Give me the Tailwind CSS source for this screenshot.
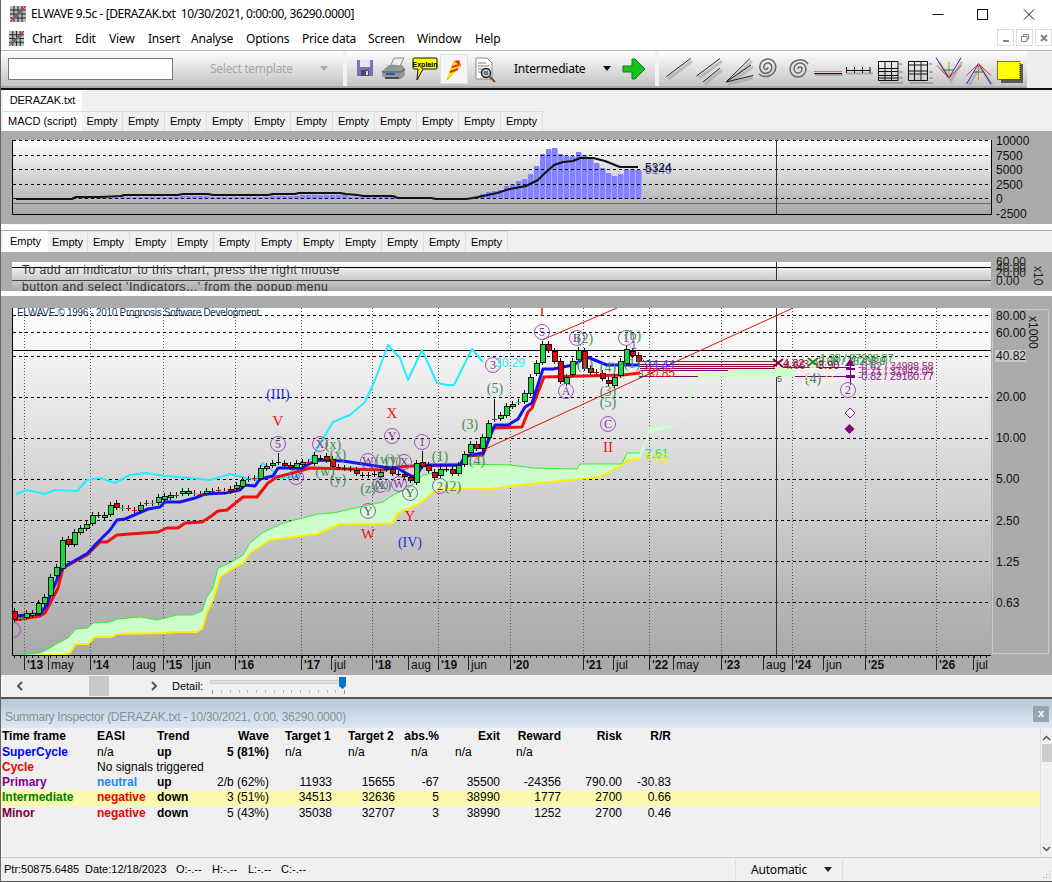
<!DOCTYPE html>
<html lang="en">
<head>
<meta charset="UTF-8" />
<title>ELWAVE 9.5c</title>
<script src="https://cdn.jsdelivr.net/npm/@tailwindcss/browser@4"></script>
</head>
<body class="relative w-[1052px] h-[882px] overflow-hidden bg-[#f0f0f0] text-black text-[12px] font-['Liberation_Sans',sans-serif]">

<!-- Title bar -->
<div class="flex items-center h-[27px] bg-white font-['Noto_Sans',sans-serif]">
  <svg class="ml-[10px] w-[16px] h-[16px]" viewBox="0 0 16 16"><rect width="16" height="16" fill="#bbb"/><path d="M0 4H16M0 8H16M0 12H16M4 0V16M8 0V16M12 0V16" stroke="#222" stroke-width="1"/><path d="M3 13L13 4" stroke="#19b5c9" stroke-width="3"/><path d="M0 16L16 0" stroke="#e01010" stroke-width="1.2"/></svg>
  <span class="ml-[5px] text-[12px] tracking-[-0.41px] whitespace-pre">ELWAVE 9.5c - [DERAZAK.txt  10/30/2021, 0:00:00, 36290.0000]</span>
  <svg class="ml-auto mr-[16px] w-[112px] h-[27px]" viewBox="0 0 112 27"><path d="M8.500 14.500H19.500" stroke="#111"/><rect x="53.500" y="9.500" width="10" height="10" fill="none" stroke="#111"/><path d="M100 9.500L110 19.500M110 9.500L100 19.500" stroke="#111"/></svg>
</div>

<!-- Menu bar -->
<div class="flex items-center h-[23px] bg-white font-['Noto_Sans',sans-serif] text-[12px] tracking-[-0.2px]">
  <div class="w-[32px] pl-[9px]"><svg class="w-[15px] h-[15px]" viewBox="0 0 16 16"><rect width="16" height="16" fill="#bbb"/><path d="M0 4H16M0 8H16M0 12H16M4 0V16M8 0V16M12 0V16" stroke="#222"/><path d="M3 13L13 4" stroke="#19b5c9" stroke-width="3"/><path d="M0 16L16 0" stroke="#e01010" stroke-width="1.2"/></svg></div>
  <span class="w-[43px]">Chart</span><span class="w-[34px]">Edit</span><span class="w-[39px]">View</span><span class="w-[43px]">Insert</span><span class="w-[55px]">Analyse</span><span class="w-[56px]">Options</span><span class="w-[66px]">Price data</span><span class="w-[49px]">Screen</span><span class="w-[58px]">Window</span><span>Help</span>
  <div class="ml-auto flex gap-[2px] mt-[-2px]">
    <div class="flex items-center justify-center w-[17px] h-[17px] border border-[#ddd]"><svg class="w-[10px] h-[10px]" viewBox="0 0 10 10"><path d="M2 8H8" stroke="#7a8591" stroke-width="2"/></svg></div>
    <div class="flex items-center justify-center w-[17px] h-[17px] border border-[#ddd]"><svg class="w-[10px] h-[10px]" viewBox="0 0 10 10"><path d="M3.500 3V1.500H8.500V6H7M1.500 3.500H7V8.500H1.500Z" fill="none" stroke="#7a8591"/></svg></div>
    <div class="flex items-center justify-center w-[17px] h-[17px] border border-[#ddd]"><svg class="w-[10px] h-[10px]" viewBox="0 0 10 10"><path d="M2 2L8 8M8 2L2 8" stroke="#7a8591" stroke-width="2"/></svg></div>
  </div>
</div>

<!-- Toolbar -->
<div class="flex items-center h-[40px] border-t border-t-[#bbb] border-b-2 border-b-[#111] bg-[#eeeeee]">
  <div class="flex items-center h-full w-[1027px] bg-gradient-to-b from-[#ffffff] to-[#c4c4c4] border-b-2 border-b-[#aaaaaa]">
    <div class="ml-[8px] w-[165px] h-[22px] bg-white border border-[#777]"></div>
    <span class="ml-[37px] w-[110px] text-[#a8a8a8] font-['Noto_Sans',sans-serif] tracking-[-0.3px]">Select template</span>
    <svg class="w-[8px] h-[5px]" viewBox="0 0 8 5"><path d="M0 0H8L4 5Z" fill="#aaa"/></svg>
    <div class="ml-[15px] w-[4px] h-full bg-[#f2f2f2]"></div>

    <!-- file tools -->
    <svg class="ml-[4px] w-[28px] h-[28px]" viewBox="0 0 28 28"><path d="M6 5H22V21H6Z" fill="#7e6fb8"/><rect x="9" y="5" width="10" height="7" fill="#e8e6f2"/><rect x="10" y="15" width="8" height="6" fill="#4a4a60"/><rect x="15" y="16" width="2" height="4" fill="#ddd"/></svg>
    <svg class="w-[28px] h-[28px]" viewBox="0 0 28 28"><path d="M3 16L10 10H23L26 14V20L22 24H8L3 21Z" fill="#8f979c"/><path d="M12 10L15 3H25L21 11Z" fill="#eee" stroke="#888"/><path d="M3 17L22 17L26 14" fill="none" stroke="#555"/><path d="M7 19H16" stroke="#1c5fa8" stroke-width="2"/><path d="M6 23H20" stroke="#333" stroke-width="1.500"/></svg>
    <svg class="ml-[4px] w-[28px] h-[28px]" viewBox="0 0 28 28"><path d="M3 3H25Q26 3 26 4V13Q26 14 25 14H12L6 25L7 14H3Q2 14 2 13V4Q2 3 3 3Z" fill="#ffff00" stroke="#111"/><text x="14" y="11.500" text-anchor="middle" font-size="7" font-weight="700" font-family="Liberation Sans">Explain</text></svg>
    <div class="ml-[1px] flex items-center justify-center w-[28px] h-[30px] bg-[#f6f6f6] border border-[#ddd]"><svg class="w-[24px] h-[26px]" viewBox="0 0 24 26"><path d="M5 24L12 5L19 10Z" fill="#ffe900" stroke="#e8c800"/><path d="M12 5L17 4L19 10Z" fill="#ee2b2b"/><path d="M8 16L16 13M10 11L17 9" stroke="#ee2b2b" stroke-width="2"/></svg></div>
    <svg class="ml-[1px] w-[28px] h-[28px]" viewBox="0 0 28 28"><path d="M7 3H18L23 8V24H7Z" fill="#fff" stroke="#888"/><path d="M9 8H17M9 11H20M9 14H20M9 17H14" stroke="#777"/><circle cx="17" cy="18" r="4.500" fill="#b9cbe0" stroke="#222" stroke-width="1.500"/><path d="M15 17H19M15 19H19" stroke="#222"/><path d="M20 21L26 27" stroke="#7a4a20" stroke-width="2"/></svg>

    <span class="ml-[17px] w-[89px] font-['Noto_Sans',sans-serif] tracking-[-0.2px]">Intermediate</span>
    <svg class="w-[8px] h-[5px]" viewBox="0 0 8 5"><path d="M0 0H8L4 5Z" fill="#111"/></svg>
    <svg class="ml-[11px] w-[24px] h-[22px]" viewBox="0 0 24 22"><path d="M1 8H10V1H13L23 11L13 21H10V14H1Z" fill="#16c41f" stroke="#0b7f12"/></svg>
    <div class="ml-[9px] w-[4px] h-full bg-[#f2f2f2]"></div>

    <!-- drawing tools -->
    <div class="ml-[4px] flex">
      <svg class="w-[30px] h-[34px]" viewBox="0 0 30 34"><path d="M5 27L29 9" stroke="#999" stroke-width="3" opacity=".5"/><path d="M3.500 24.500L27.500 6.500" stroke="#222"/></svg>
      <svg class="w-[30px] h-[34px]" viewBox="0 0 30 34"><path d="M6 26L29 9M12 32L29 18" stroke="#999" stroke-width="3" opacity=".5"/><path d="M3.500 24L27 6.500M10 30L27 16" stroke="#222"/></svg>
      <svg class="w-[30px] h-[34px]" viewBox="0 0 30 34"><path d="M5 32L29 9M5 32L30 15M5 32L30 26" stroke="#999" stroke-width="3" opacity=".5"/><path d="M3 30L27 6.500M3 30L28 13M3 30L30 23.500" stroke="#222"/></svg>
      <svg class="w-[30px] h-[34px]" viewBox="0 0 30 34"><path d="M15 17A2 2 0 0 1 19 17A4 4 0 0 1 11 17A6 6 0 0 1 23 17A8 8 0 0 1 7 17A10 10 0 0 1 25 12" transform="rotate(170 15 16)" fill="none" stroke="#666" stroke-width="1.500"/></svg>
      <svg class="w-[30px] h-[34px]" viewBox="0 0 30 34"><path d="M15 17A2 2 0 0 1 19 17A4 4 0 0 1 11 17A6 6 0 0 1 23 17A8 8 0 0 1 7 17A10 10 0 0 1 25 12" fill="none" stroke="#666" stroke-width="1.500"/></svg>
      <svg class="w-[30px] h-[34px]" viewBox="0 0 30 34"><path d="M1.500 19.500H28.500" stroke="#f00" stroke-dasharray="1 1"/><path d="M2 23H30" stroke="#888" stroke-width="2" opacity=".6"/><path d="M1.500 21.500H29" stroke="#111"/></svg>
      <svg class="w-[30px] h-[34px]" viewBox="0 0 30 34"><path d="M4 21.500H30" stroke="#888" stroke-width="2" opacity=".6"/><path d="M3.500 18.500H27M3.500 15V21M11.500 15V21M19.500 15V21M27 15V21" stroke="#111"/></svg>
      <svg class="w-[30px] h-[34px]" viewBox="0 0 30 34"><path d="M7 31H30M26 12H29M26 20H30M26 26H30" stroke="#888" stroke-width="2" opacity=".6"/><path d="M5.500 9.500H25V28.500H5.500ZM12 9.500V28.500M18.500 9.500V28.500M5.500 16.500H25M5.500 19.500H25M5.500 23.500H25M5.500 26H25" fill="none" stroke="#111"/></svg>
      <svg class="w-[30px] h-[34px]" viewBox="0 0 30 34"><path d="M7 31H30M26 12H29M26 20H30M26 26H30" stroke="#888" stroke-width="2" opacity=".6"/><path d="M5.500 9.500H24.500V28.500H5.500ZM11.500 9.500V28.500M18 9.500V28.500M5.500 13H24.500M5.500 19H24.500M5.500 22H24.500" fill="none" stroke="#111"/></svg>
      <svg class="w-[30px] h-[34px]" viewBox="0 0 30 34"><path d="M6 10L18 29L29 10" fill="none" stroke="#777" stroke-width="2.500" opacity=".4"/><path d="M4 13.500L16 26L28 13.500" fill="none" stroke="#f22"/><path d="M3 5.700L16 26L28 5.700" fill="none" stroke="#2222cc"/><path d="M16 10V26" stroke="#f08000"/><path d="M10 18H21" stroke="#0a8a20"/></svg>
      <svg class="w-[30px] h-[34px]" viewBox="0 0 30 34"><path d="M17 15L6 33M17 15L29 33" fill="none" stroke="#777" stroke-width="2.500" opacity=".4"/><path d="M3.500 23.500L15.500 11.800L28 23.500" fill="none" stroke="#f22"/><path d="M3.500 32L15.500 11.800L28 32" fill="none" stroke="#2222cc"/><path d="M15.500 11.800V28.500" stroke="#f08000"/><path d="M11 20H20" stroke="#0a8a20"/></svg>
      <svg class="w-[30px] h-[34px]" viewBox="0 0 30 34"><rect x="8" y="12" width="23" height="19" fill="#333" opacity=".75"/><rect x="4.500" y="9.500" width="22.500" height="18" fill="#ffff00" stroke="#000" stroke-dasharray="1 1"/></svg>
    </div>
  </div>
</div>

<!-- Chart tabs, first pane -->
<div class="h-[21px] pl-[3px]"><div class="flex items-center justify-center w-[79px] h-full bg-white text-[11px] tracking-[-0.1px]">DERAZAK.txt</div></div>
<div class="flex h-[20px] pl-[3px] text-[11px]">
  <div class="flex items-center justify-center w-[79px] bg-white border-t border-[#ddd]">MACD (script)</div>
  <div class="flex items-center justify-center w-[41px] border-r border-t border-[#ddd]">Empty</div>
  <div class="flex items-center justify-center w-[42px] border-r border-t border-[#ddd]">Empty</div>
  <div class="flex items-center justify-center w-[42px] border-r border-t border-[#ddd]">Empty</div>
  <div class="flex items-center justify-center w-[42px] border-r border-t border-[#ddd]">Empty</div>
  <div class="flex items-center justify-center w-[42px] border-r border-t border-[#ddd]">Empty</div>
  <div class="flex items-center justify-center w-[42px] border-r border-t border-[#ddd]">Empty</div>
  <div class="flex items-center justify-center w-[42px] border-r border-t border-[#ddd]">Empty</div>
  <div class="flex items-center justify-center w-[42px] border-r border-t border-[#ddd]">Empty</div>
  <div class="flex items-center justify-center w-[42px] border-r border-t border-[#ddd]">Empty</div>
  <div class="flex items-center justify-center w-[42px] border-r border-t border-[#ddd]">Empty</div>
  <div class="flex items-center justify-center w-[42px] border-r border-t border-[#ddd]">Empty</div>
</div>

<!-- MACD pane -->
<div class="h-[93px] bg-[#ababab]"><svg id="macd" class="block w-[1052px] h-[93px]" viewBox="0 131 1052 93"></svg></div>
<div class="h-[7px] bg-white border-b border-b-[#aaa]"></div>

<!-- Indicator tabs -->
<div class="flex h-[21px] pl-[3px] text-[11px]">
  <div class="flex items-center justify-center w-[45px] bg-white">Empty</div>
  <div class="flex items-center justify-center w-[40px] border-r border-t border-[#ddd]">Empty</div>
  <div class="flex items-center justify-center w-[42px] border-r border-t border-[#ddd]">Empty</div>
  <div class="flex items-center justify-center w-[42px] border-r border-t border-[#ddd]">Empty</div>
  <div class="flex items-center justify-center w-[42px] border-r border-t border-[#ddd]">Empty</div>
  <div class="flex items-center justify-center w-[42px] border-r border-t border-[#ddd]">Empty</div>
  <div class="flex items-center justify-center w-[42px] border-r border-t border-[#ddd]">Empty</div>
  <div class="flex items-center justify-center w-[42px] border-r border-t border-[#ddd]">Empty</div>
  <div class="flex items-center justify-center w-[42px] border-r border-t border-[#ddd]">Empty</div>
  <div class="flex items-center justify-center w-[42px] border-r border-t border-[#ddd]">Empty</div>
  <div class="flex items-center justify-center w-[42px] border-r border-t border-[#ddd]">Empty</div>
  <div class="flex items-center justify-center w-[42px] border-r border-t border-[#ddd]">Empty</div>
</div>

<!-- Indicator pane -->
<div class="h-[39px] bg-[#ababab]"><svg id="ind" class="block w-[1052px] h-[39px]" viewBox="0 252 1052 39"></svg></div>
<div class="h-[6px] bg-white border-b border-b-[#aaa]"></div>

<!-- Main chart pane -->
<div class="h-[378px] bg-[#ababab]"><svg id="main" class="block w-[1052px] h-[378px]" viewBox="0 297 1052 378"></svg></div>

<!-- Scroll and detail -->
<div class="flex items-center h-[22px]">
  <svg class="ml-[16px] w-[8px] h-[10px]" viewBox="0 0 8 10"><path d="M6 1L2 5L6 9" fill="none" stroke="#555" stroke-width="2"/></svg>
  <div class="ml-[65px] w-[20px] h-[20px] bg-[#c8c8c8]"></div>
  <svg class="ml-[41px] w-[8px] h-[10px]" viewBox="0 0 8 10"><path d="M2 1L6 5L2 9" fill="none" stroke="#555" stroke-width="2"/></svg>
  <span class="ml-[14px] text-[11px]">Detail:</span>
  <div class="relative ml-[7px] w-[137px] h-[22px]">
    <div class="absolute left-0 top-[5px] w-[135px] h-[4px] bg-[#e0e0e0] border border-[#d0d0d0]"></div>
    <div class="absolute left-[2px] right-[2px] top-[15px] flex justify-between">
      <i class="block w-[1px] h-[4px] bg-[#999]"></i><i class="block w-[1px] h-[3px] bg-[#bbb]"></i><i class="block w-[1px] h-[3px] bg-[#bbb]"></i><i class="block w-[1px] h-[3px] bg-[#bbb]"></i><i class="block w-[1px] h-[3px] bg-[#bbb]"></i><i class="block w-[1px] h-[3px] bg-[#bbb]"></i><i class="block w-[1px] h-[3px] bg-[#bbb]"></i><i class="block w-[1px] h-[3px] bg-[#bbb]"></i><i class="block w-[1px] h-[3px] bg-[#bbb]"></i><i class="block w-[1px] h-[3px] bg-[#bbb]"></i><i class="block w-[1px] h-[3px] bg-[#bbb]"></i><i class="block w-[1px] h-[3px] bg-[#bbb]"></i><i class="block w-[1px] h-[3px] bg-[#bbb]"></i><i class="block w-[1px] h-[3px] bg-[#bbb]"></i><i class="block w-[1px] h-[3px] bg-[#bbb]"></i><i class="block w-[1px] h-[4px] bg-[#999]"></i>
    </div>
    <svg class="absolute left-[129px] top-[2px] w-[7px] h-[12px]" viewBox="0 0 7 12"><path d="M0 0H7V9L3.500 12L0 9Z" fill="#0a6fd6"/></svg>
  </div>
</div>

<!-- Summary Inspector -->
<div class="h-[2px] bg-[#555]"></div>
<div class="flex items-center h-[29px] pl-[5px] pr-[3px] pt-[6px] bg-gradient-to-b from-[#b8c8da] to-[#dde8f4] text-[#8a8f95]">
  <span class="tracking-[-0.29px]">Summary Inspector (DERAZAK.txt - 10/30/2021, 0:00, 36290.0000)</span>
  <div class="ml-auto flex items-center justify-center w-[16px] h-[16px] mt-[-6px] bg-[#98a4b0] text-white text-[11px] font-bold">x</div>
</div>
<div class="flex h-[129px]">
  <div class="w-[1040px] whitespace-nowrap">
    <div class="grid grid-cols-[95px_60px_50px_62px_63px_63px_44px_61px_61px_61px_49px] pl-[2px] h-[17px] leading-[17px] font-bold">
      <span>Time frame</span><span>EASI</span><span>Trend</span><span class="text-right">Wave</span><span class="pl-[16px]">Target 1</span><span class="pl-[16px]">Target 2</span><span class="text-right">abs.%</span><span class="text-right">Exit</span><span class="text-right">Reward</span><span class="text-right">Risk</span><span class="text-right">R/R</span>
    </div>
    <div class="grid grid-cols-[95px_60px_50px_62px_63px_63px_44px_61px_61px_61px_49px] pl-[2px] h-[15px] leading-[15px]">
      <span class="font-bold text-[#0000ff]">SuperCycle</span><span>n/a</span><span class="font-bold">up</span><span class="text-right font-bold">5 (81%)</span><span class="pl-[16px]">n/a</span><span class="pl-[16px]">n/a</span><span class="pl-[16px]">n/a</span><span class="pl-[16px]">n/a</span><span class="pl-[16px]">n/a</span>
    </div>
    <div class="flex pl-[2px] h-[15px] leading-[15px]">
      <span class="w-[95px] font-bold text-[#ee0000]">Cycle</span><span>No signals triggered</span>
    </div>
    <div class="grid grid-cols-[95px_60px_50px_62px_63px_63px_44px_61px_61px_61px_49px] pl-[2px] h-[15px] leading-[15px]">
      <span class="font-bold text-[#800090]">Primary</span><span class="font-bold text-[#1e88f0]">neutral</span><span class="font-bold">up</span><span class="text-right">2/b (62%)</span><span class="text-right">11933</span><span class="text-right">15655</span><span class="text-right">-67</span><span class="text-right">35500</span><span class="text-right">-24356</span><span class="text-right">790.00</span><span class="text-right">-30.83</span>
    </div>
    <div class="grid grid-cols-[95px_60px_50px_62px_63px_63px_44px_61px_61px_61px_49px] pl-[2px] h-[16px] leading-[15px] bg-[#fbf9ad]">
      <span class="font-bold text-[#008000]">Intermediate</span><span class="font-bold text-[#f00000]">negative</span><span class="font-bold">down</span><span class="text-right">3 (51%)</span><span class="text-right">34513</span><span class="text-right">32636</span><span class="text-right">5</span><span class="text-right">38990</span><span class="text-right">1777</span><span class="text-right">2700</span><span class="text-right">0.66</span>
    </div>
    <div class="grid grid-cols-[95px_60px_50px_62px_63px_63px_44px_61px_61px_61px_49px] pl-[2px] h-[15px] leading-[14px]">
      <span class="font-bold text-[#80003c]">Minor</span><span class="font-bold text-[#f00000]">negative</span><span class="font-bold">down</span><span class="text-right">5 (43%)</span><span class="text-right">35038</span><span class="text-right">32707</span><span class="text-right">3</span><span class="text-right">38990</span><span class="text-right">1252</span><span class="text-right">2700</span><span class="text-right">0.46</span>
    </div>
  </div>
  <div class="flex flex-col items-center w-[12px] border-l border-[#ddd]">
    <svg class="mt-[7px] w-[9px] h-[6px]" viewBox="0 0 9 6"><path d="M1 5L4.500 1.500L8 5" fill="none" stroke="#555" stroke-width="1.500"/></svg>
    <div class="mt-[3px] w-[10px] h-[18px] bg-[#cdcdcd]"></div>
    <svg class="mt-auto mb-[5px] w-[9px] h-[6px]" viewBox="0 0 9 6"><path d="M1 1L4.500 4.500L8 1" fill="none" stroke="#555" stroke-width="1.500"/></svg>
  </div>
</div>

<!-- Status bar -->
<div class="flex items-center h-[24px] border-t border-[#ccc] text-[11px]">
  <span class="ml-[4px] w-[81px]">Ptr:50875.6485</span><span class="w-[91px]">Date:12/18/2023</span><span class="w-[36px]">O:-.--</span><span class="w-[36px]">H:-.--</span><span class="w-[33px]">L:-.--</span><span class="w-[31px]">C:-.--</span>
  <div class="ml-[423px] flex items-center w-[108px] h-[22px] border-l border-r border-[#ddd]">
    <span class="ml-[15px] w-[73px] text-[12px] font-['Noto_Sans',sans-serif] tracking-[-0.2px]">Automatic</span>
    <svg class="w-[8px] h-[5px]" viewBox="0 0 8 5"><path d="M0 0H8L4 5Z" fill="#222"/></svg>
  </div>
  <svg class="ml-auto mr-[1px] mt-[8px] w-[10px] h-[10px]" viewBox="0 0 10 10"><path d="M8 2h1v1H8zM5 5h1v1H5zM8 5h1v1H8zM2 8h1v1H2zM5 8h1v1H5zM8 8h1v1H8z" fill="#aaa"/></svg>
</div>

<!-- window frame -->
<div class="absolute left-0 top-0 w-[1px] h-full bg-[#666]"></div>
<div class="absolute left-0 bottom-0 w-full h-[1px] bg-[#555]"></div>

<script>
  const SANS = 'Liberation Sans', SERIF = 'Liberation Serif'

  function txt(x, y, s, fill, size, opts = {}) {
    const anchor = opts.anchor ? ` text-anchor="${opts.anchor}"` : ''
    const weight = opts.bold ? ' font-weight="700"' : ''
    const extra = opts.attr || ''
    return `<text x="${x}" y="${y}" fill="${fill}" font-size="${size}" font-family="${opts.font || SANS}"${anchor}${weight} ${extra}>${s}</text>`
  }
  function line(pts, color, width) {
    return `<polyline points="${pts.map(p => p.join(',')).join(' ')}" fill="none" stroke="${color}" stroke-width="${width}" stroke-linejoin="round"/>`
  }
  function grad(id, y1, y2) {
    return `<linearGradient id="${id}" gradientUnits="userSpaceOnUse" x1="0" x2="0" y1="${y1}" y2="${y2}"><stop offset="0" stop-color="#ffffff"/><stop offset="1" stop-color="#a9a9a9"/></linearGradient>`
  }
  function dashH(y, x1 = 13, x2 = 991) {
    return `<path d="M${x1} ${y}.5H${x2}" stroke="#000" stroke-dasharray="3 3" shape-rendering="crispEdges"/>`
  }

  // MACD pane
  let macd = `<defs>${grad('g1', 140, 214)}</defs><rect x="13" y="140" width="978" height="74" fill="url(#g1)"/>`
  const small = [[75, 118, 198], [120, 180, 197], [180, 210, 196], [210, 268, 197], [268, 300, 196], [300, 345, 195], [345, 395, 197]]
  const tall = { 482: 194, 488: 192, 494: 191, 500: 190, 506: 186, 512: 184, 518: 181, 524: 179, 530: 174, 536: 166, 542: 154, 548: 149, 554: 148, 560: 154, 566: 156, 572: 156, 578: 152, 584: 155, 590: 159, 596: 163, 602: 168, 608: 173, 614: 176, 620: 174, 626: 169, 632: 169, 638: 170 }
  for (let x = 14; x < 644; x += 6) {
    let top = tall[x]
    if (!top) { const r = small.find(s => x >= s[0] && x < s[1]); top = r ? r[2] : 199 }
    macd += `<rect x="${x - 2}" y="${top}" width="5" height="${199 - top}" fill="#8383ff"/><rect x="${x + 3}" y="${top + 1}" width="1" height="${Math.max(199 - top - 1, 0)}" fill="#a9a9ff"/>`
  }
  for (const y of [140, 155, 169, 184, 198]) macd += dashH(y)
  macd += `<path d="M13 203.500H991" stroke="#666"/>`
  macd += `<path d="M12.500 140V214.500H991.500V140" fill="none" stroke="#000"/><path d="M776.500 140V214" stroke="#333"/>`
  macd += line([[16, 199], [72, 199], [76, 197], [100, 197], [121, 196], [124, 195], [178, 195], [183, 194], [208, 194], [213, 195], [268, 195], [273, 194], [295, 194], [299, 193], [340, 193], [346, 194], [357, 195], [364, 196], [393, 196], [398, 198], [431, 198], [436, 199], [466, 199], [473, 198], [483, 196], [497, 193], [510, 189], [526, 186], [538, 180], [544, 174], [554, 165], [563, 162], [573, 161], [580, 158], [593, 158], [605, 161], [620, 167], [638, 167]], '#111', 2)
  macd += txt(645, 174, '5140', '#5a6ae0', 12) + txt(645, 172, '5324', '#111', 12)
  const macdLabels = [['10000', 145], ['7500', 160], ['5000', 174], ['2500', 189], ['0', 203], ['-2500', 218]]
  macdLabels.forEach(l => { macd += txt(996, l[1], l[0], '#111', 12) })
  document.getElementById('macd').innerHTML = macd

  // Indicator pane
  let ind = `<defs>${grad('g2', 262, 291)}<clipPath id="c2"><rect x="13" y="262" width="1040" height="29"/></clipPath></defs><rect x="12" y="262" width="979" height="29" fill="url(#g2)"/>`
  ind += `<path d="M12 267.500H991" stroke="#000"/><path d="M12 280.500H991" stroke="#444"/><path d="M776.500 262V281" stroke="#333"/>`
  ind += `<g clip-path="url(#c2)">` + txt(22, 274, 'To add an indicator to this chart, press the right mouse', '#333', 12, { attr: 'letter-spacing=".52"' }) + txt(22, 291, 'button and select \'Indicators...\' from the popup menu', '#333', 12, { attr: 'letter-spacing=".52"' }) + `</g>`
  ind += txt(996, 266, '60.00', '#222', 12) + txt(996, 272, '40.00', '#222', 12) + txt(996, 277, '20.00', '#222', 12) + txt(996, 285, '0.00', '#222', 12)
  ind += txt(0, 0, 'x10', '#222', 12, { attr: 'transform="translate(1034 266) rotate(90)"' })
  document.getElementById('ind').innerHTML = ind

  // Main chart pane
  const vGrid = [24, 90, 163, 235, 301, 372, 438, 510, 583, 649, 721, 792, 865, 936]
  let m = `<defs>${grad('g3', 308, 655)}<clipPath id="c3"><rect x="13" y="308" width="978" height="347"/></clipPath></defs>`
  m += `<rect x="12" y="308" width="979" height="347" fill="url(#g3)"/>`
  vGrid.forEach(x => { m += `<path d="M${x}.5 308V655" stroke="#555" stroke-dasharray="1 2"/>` })
  ;[315, 332, 356, 397, 438, 479, 520, 561, 602].forEach(y => { m += dashH(y) })
  m += `<path d="M13 350.500H991" stroke="#000"/><path d="M776.500 308V655" stroke="#333"/>`
  m += `<g clip-path="url(#c3)">`

  // cloud
  const cloudTop = [[20, 654], [40, 653], [50, 648], [58, 643], [68, 638], [76, 629], [88, 628], [93, 623], [110, 622], [117, 619], [140, 617], [157, 620], [177, 615], [192, 615], [202, 611], [207, 597], [213, 588], [218, 568], [230, 563], [243, 555], [250, 543], [262, 533], [283, 523], [318, 514], [333, 513], [360, 507], [383, 502], [393, 495], [410, 487], [423, 475], [450, 470], [457, 465], [467, 464], [510, 465], [533, 468], [577, 469], [580, 464], [622, 464], [627, 453], [640, 453]]
  const cloudLow = [[40, 655], [63, 655], [70, 653], [76, 644], [88, 644], [95, 637], [112, 637], [117, 634], [163, 633], [177, 632], [197, 632], [202, 629], [207, 612], [213, 600], [220, 577], [233, 568], [243, 563], [250, 553], [270, 540], [317, 534], [340, 524], [377, 524], [393, 523], [398, 513], [417, 505], [430, 495], [440, 489], [490, 489], [520, 485], [600, 477], [625, 463], [628, 460], [640, 459]]
  const fadeTop = [[640, 453], [647, 437], [650, 428], [673, 426], [688, 407], [698, 375], [740, 368], [795, 367]]
  const fadeLow = [[795, 377], [695, 378], [688, 408], [673, 427], [650, 433], [640, 459]]
  m += `<polygon points="${cloudTop.concat(cloudLow.slice().reverse()).map(p => p.join(',')).join(' ')}" fill="#ccffcc"/>`
  m += `<polygon points="${fadeTop.concat(fadeLow).map(p => p.join(',')).join(' ')}" fill="#ccffcc"/>`
  m += line(cloudTop, '#33ee33', 1) + line(cloudLow, '#ffee00', 2) + line(fadeTop, '#ccffcc', 1)

  // cyan line
  m += line([[16, 494], [27, 490], [45, 494], [55, 490], [77, 491], [87, 480], [100, 478], [115, 483], [130, 475], [145, 473], [165, 476], [190, 478], [210, 480], [230, 474], [245, 478], [257, 480], [262, 463], [270, 468], [278, 478], [297, 477], [312, 457], [333, 422], [350, 415], [365, 402], [375, 380], [388, 345], [400, 358], [408, 380], [422, 350], [437, 383], [447, 385], [454, 385], [472, 349], [483, 362]], '#22eeff', 2)

  // averages
  m += line([[14, 620], [40, 616], [45, 613], [58, 588], [63, 568], [87, 555], [100, 542], [107, 542], [117, 535], [143, 533], [158, 532], [167, 528], [178, 528], [185, 523], [202, 522], [210, 517], [218, 511], [227, 510], [243, 497], [257, 497], [268, 483], [277, 477], [293, 473], [310, 468], [350, 469], [383, 470], [397, 467], [413, 466], [460, 465], [467, 456], [483, 455], [493, 428], [522, 427], [528, 412], [532, 408], [544, 377], [623, 375], [640, 373]], '#f01010', 3)
  m += line([[14, 616], [40, 614], [47, 605], [50, 596], [62, 568], [88, 553], [95, 545], [110, 530], [117, 520], [125, 519], [148, 509], [160, 507], [165, 502], [180, 502], [195, 498], [205, 494], [225, 493], [240, 490], [245, 485], [255, 486], [260, 479], [273, 476], [278, 468], [290, 468], [300, 469], [313, 462], [320, 460], [343, 461], [363, 464], [383, 467], [397, 468], [413, 477], [418, 473], [423, 465], [460, 465], [465, 456], [483, 453], [495, 425], [508, 425], [518, 419], [525, 407], [532, 403], [543, 369], [553, 369], [573, 365], [587, 357], [607, 365], [640, 365]], '#1414f0', 3)

  // channel
  m += `<path d="M542 340L617 308M483 450L793 308" stroke="#e81010" fill="none"/>`

  // candles: top, bottom, colour, optional wick top
  const candles = [[611, 619, 'r'], [618, 618, 'g'], [613, 617, 'g'], [613, 615, 'g'], [603, 613, 'g'], [597, 603, 'g'], [577, 595, 'g'], [567, 575, 'g'], [540, 568, 'g'], [539, 544, 'r'], [532, 544, 'g'], [528, 532, 'g'], [524, 528, 'g'], [515, 523, 'g'], [515, 515, 'd'], [515, 517, 'g'], [505, 514, 'g'], [503, 507, 'r'], [508, 508, 'g'], [508, 508, 'r'], [510, 510, 'r'], [505, 510, 'g'], [503, 503, 'r'], [503, 503, 'g'], [497, 502, 'g'], [496, 499, 'g'], [495, 497, 'g'], [495, 495, 'r'], [491, 493, 'g'], [491, 493, 'g'], [493, 493, 'g'], [494, 494, 'r'], [491, 493, 'g'], [491, 491, 'r'], [490, 490, 'r'], [491, 491, 'g'], [489, 491, 'r'], [485, 488, 'g'], [480, 486, 'g'], [479, 479, 'r'], [478, 478, 'r'],
    [468, 478, 'g'], [466, 468, 'g'], [463, 465, 'g'], [462, 462, 'd', 453], [463, 465, 'r'], [465, 467, 'r'], [463, 467, 'g'], [462, 464, 'g'], [462, 462, 'r'], [455, 463, 'g'], [458, 458, 'd'], [456, 460, 'r'], [459, 466, 'r'], [467, 467, 'd'], [468, 468, 'd'], [469, 469, 'd'], [470, 473, 'r'], [475, 475, 'd'], [475, 475, 'd'], [474, 474, 'd'], [472, 476, 'g'], [469, 469, 'd'], [469, 473, 'r'], [474, 474, 'd'], [474, 476, 'r'], [477, 480, 'r'], [463, 482, 'g'], [462, 466, 'r', 451], [465, 470, 'r'], [472, 477, 'r'], [469, 475, 'g'], [469, 469, 'd'], [469, 473, 'r'], [465, 473, 'g'], [454, 464, 'g'], [444, 452, 'g'], [444, 448, 'r'], [437, 448, 'g'], [423, 437, 'g'], [419, 419, 'r', 399], [415, 418, 'g'], [406, 415, 'g'], [404, 406, 'g'], [402, 402, 'g'], [393, 401, 'g'], [377, 393, 'g'], [363, 373, 'g'], [344, 362, 'g'], [344, 350, 'r'], [351, 361, 'r'], [361, 381, 'r'], [377, 383, 'g'], [361, 374, 'g'], [350, 359, 'g'], [351, 368, 'r'], [368, 372, 'r'], [372, 372, 'r'], [373, 378, 'r'], [380, 383, 'r'], [377, 385, 'g'], [361, 375, 'g'], [349, 363, 'g'], [351, 355, 'r'], [355, 361, 'r']]
  const fills = { g: '#14dc3c', r: '#f00000', d: '#111' }
  candles.forEach((c, k) => {
    const x = 14 + 6 * k, [t, b, col, wick] = c
    m += `<path d="M${x}.5 ${wick || t - 3}V${b + 3}" stroke="#111"/>`
    if (t === b) m += `<path d="M${x - 2} ${t}.5H${x + 3}" stroke="${fills[col]}"/>`
    else m += `<rect x="${x - 2}.5" y="${t}.5" width="5" height="${b - t}" fill="${fills[col]}" stroke="#111"/>`
  })

  // targets
  m += `<path d="M640 361.500H775" stroke="#1d6b1d"/><path d="M640 364.500H775M640 366.500H775M640 368.500H775" stroke="#800040"/><path d="M640 370.500H728M640 376.500H698" stroke="#800080"/><path d="M783 367.500H850M795 376.500H850M850.500 355V385" stroke="#800080"/>`
  m += `<path d="M640 355L652 374" stroke="#800040" stroke-dasharray="2 1"/>`

  // wave labels
  const purple = '#a052b8'
  const circled = [[278, 444, '5'], [320, 444, 'X'], [296, 477, 'W'], [368, 461, 'W'], [392, 436, 'Y'], [404, 462, 'X'], [422, 442, '1'], [368, 511, 'Y'], [410, 493, 'Y'], [380, 485, 'X'], [399, 484, 'W'], [440, 486, '2'], [542, 332, '5'], [577, 338, 'B'], [626, 338, '1'], [566, 391, 'A'], [608, 424, 'C'], [493, 365, '3'], [848, 390, '2'], [13, 630, '']]
  circled.forEach(c => {
    m += `<circle cx="${c[0]}" cy="${c[1]}" r="7.500" fill="none" stroke="${purple}"/>` + txt(c[0], c[1] + 4, c[2], '#7c2f96', 12, { anchor: 'middle', font: SERIF })
  })
  const greenLabels = [[333, 449, '(x)'], [338, 459, '(x)'], [325, 476, '(w)'], [338, 484, '(y)'], [385, 464, '(w)'], [393, 464, '(y)'], [368, 493, '(z)'], [383, 489, '(x)'], [440, 461, '(1)'], [453, 491, '(2)'], [470, 429, '(3)'], [477, 465, '(4)'], [585, 343, '(2)'], [633, 340, '(b)'], [495, 393, '(5)'], [608, 372, '(4)'], [608, 396, '(3)'], [608, 407, '(5)'], [585, 369, '(1)'], [632, 368, '(1)'], [813, 383, '(4)']]
  greenLabels.forEach(l => { m += txt(l[0], l[1], l[2], '#3f8f55', 14, { anchor: 'middle', font: SERIF }) })
  const redLabels = [[278, 426, 'V'], [392, 418, 'X'], [368, 539, 'W'], [410, 521, 'Y'], [542, 316, 'I'], [608, 452, 'II']]
  redLabels.forEach(l => { m += txt(l[0], l[1], l[2], '#ee1414', 15, { anchor: 'middle', font: SERIF }) })
  m += txt(278, 399, '(III)', '#1a2ee0', 14, { anchor: 'middle', font: SERIF }) + txt(410, 547, '(IV)', '#1a2ee0', 14, { anchor: 'middle', font: SERIF })

  m += txt(495, 367, '30.29', '#22eeff', 12)
  m += txt(645, 458, '7.61', '#33e833', 12) + txt(645, 463, '7.05', '#f0f020', 12)
  m += txt(645, 369, '34.44', '#3a3ae8', 12) + txt(645, 377, '30.85', '#ee2020', 12)
  m += txt(631, 349, '1', '#7c2f96', 10) + txt(638, 378, '3', '#555', 10)

  // projections at the right
  m += txt(783, 367, '4.82', '#800040', 11) + txt(784, 369, '4.66', '#b02040', 11) + txt(803, 368, '3.92', '#a03050', 11)
  m += txt(820, 362, '1.38 / 37208.87', '#2e9a2e', 11, { attr: 'letter-spacing="-.2"' }) + txt(818, 365, '2.08 / 36208.9', '#1d8a4a', 11, { attr: 'letter-spacing="-.2"' }) + txt(818, 369, '3.90', '#800040', 11)
  m += txt(858, 370, '-0.62 / 34988.58', '#a0308a', 11, { attr: 'letter-spacing="-.3"' }) + txt(858, 375, '-0.71 / 31942.04', '#a0308a', 11, { attr: 'letter-spacing="-.3"' }) + txt(858, 380, '-0.82 / 29160.77', '#8a1a90', 11, { attr: 'letter-spacing="-.3"' })
  m += txt(802, 381, '2', '#ffffb0', 12) + txt(823, 381, '11', '#ffffb0', 12) + txt(777, 382, '5', '#555', 9)
  m += `<path d="M773 359L783 367M783 359L773 367" stroke="#800040" stroke-width="2"/><path d="M808 358L818 366M818 358L808 366" stroke="#1d8a1d" stroke-width="2"/>`
  m += `<path d="M845 366L850 359L855 366Z" fill="#800080"/><rect x="846" y="368" width="9" height="2" fill="#800080"/><rect x="846" y="375" width="9" height="3" fill="#800080"/>`
  m += `<path d="M850 408L855 413L850 418L845 413Z" fill="#fff" stroke="#a020a0"/><path d="M849.500 424L854.500 429L849.500 434L844.500 429Z" fill="#7a0a7a"/><path d="M813 364L817 368L813 372L809 368Z" fill="#fff" opacity=".8"/>`
  m += `</g>`

  // copyright over the grid
  m += txt(17, 316, 'ELWAVE © 1996 - 2010 Prognosis Software Development', '#1c3560', 10, { attr: 'letter-spacing="-.3"' })
  // frame and price axis
  m += `<path d="M12.500 308V655.500H991" fill="none" stroke="#000"/>`
  m += `<rect x="992.500" y="309.500" width="56" height="344" fill="none" stroke="#c8c8c8"/>`
  m += `<rect x="995" y="350" width="31" height="12" fill="#c9c9c9"/>`
  ;[['80.00', 320], ['60.00', 337], ['40.82', 360], ['20.00', 401], ['10.00', 442], ['5.00', 483], ['2.50', 525], ['1.25', 566], ['0.63', 607]].forEach(l => { m += txt(996, l[1], l[0], '#111', 12) })
  m += txt(0, 0, 'x1000', '#111', 12, { attr: 'transform="translate(1029 316) rotate(90)"' })

  // time axis
  for (let x = 14; x < 991; x += 6) m += `<path d="M${x}.5 655V658" stroke="#111"/>`
  const axis = [[24, "'13", 1], [48, 'may'], [90, "'14", 1], [133, 'aug'], [163, "'15", 1], [192, 'jun'], [235, "'16", 1], [301, "'17", 1], [331, 'jul'], [372, "'18", 1], [408, 'aug'], [438, "'19", 1], [468, 'jun'], [510, "'20", 1], [583, "'21", 1], [613, 'jul'], [649, "'22", 1], [673, 'may'], [721, "'23", 1], [763, 'aug'], [792, "'24", 1], [823, 'jun'], [865, "'25", 1], [936, "'26", 1], [973, 'jul']]
  axis.forEach(a => {
    m += `<path d="M${a[0]}.5 655V670" stroke="#222"/>` + txt(a[0] + 3, 669, a[1], '#111', 12, { bold: a[2] })
  })
  document.getElementById('main').innerHTML = m
</script>
</body>
</html>
